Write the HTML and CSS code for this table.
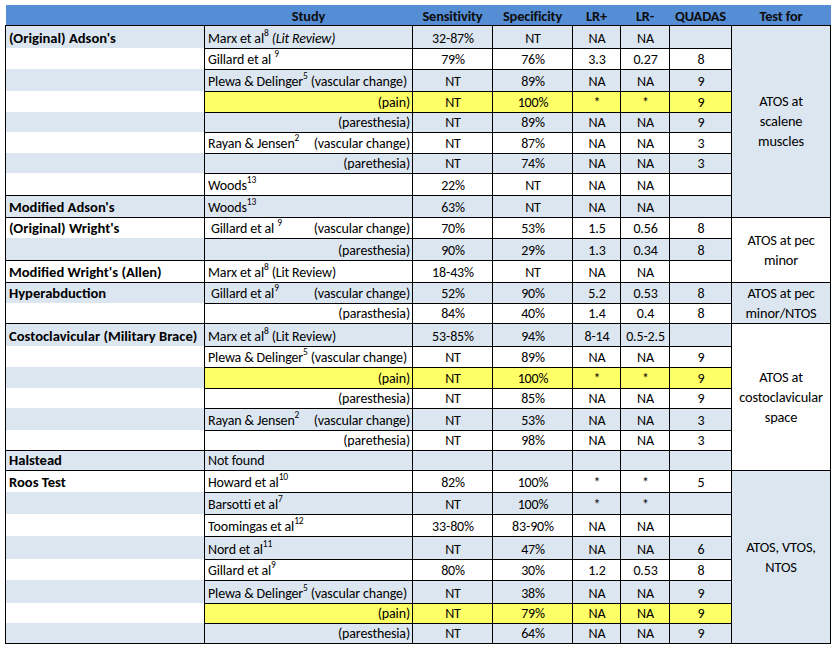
FILE: index.html
```html
<!DOCTYPE html>
<html>
<head>
<meta charset="utf-8">
<link rel="stylesheet" href="styles.css">
</head>
<body>
<table class="tbl">
<colgroup>
<col class="c1"><col class="c2"><col class="c3"><col class="c4"><col class="c5"><col class="c6"><col class="c7"><col class="c8">
</colgroup>
<thead>
<tr class="hd"><th></th><th>Study</th><th>Sensitivity</th><th>Specificity</th><th>LR+</th><th>LR-</th><th>QUADAS</th><th>Test for</th></tr>
</thead>
<tbody>
<tr class="b h23"><td class="t g">(Original) Adson's</td><td class="s">Marx et al<sup>8</sup> <i>(Lit Review)</i></td><td>32-87%</td><td>NT</td><td>NA</td><td>NA</td><td></td><td class="f fb" rowspan="9">ATOS at<br>scalene<br>muscles</td></tr>
<tr class="h21"><td class="t"></td><td class="s">Gillard et al <sup>9</sup></td><td>79%</td><td>76%</td><td>3.3</td><td>0.27</td><td>8</td></tr>
<tr class="b h22"><td class="t"></td><td class="s">Plewa &amp; Delinger<sup>5</sup> (vascular change)</td><td>NT</td><td>89%</td><td>NA</td><td>NA</td><td>9</td></tr>
<tr class="h21 y"><td class="t"></td><td class="s r">(pain)</td><td>NT</td><td>100%</td><td>*</td><td>*</td><td>9</td></tr>
<tr class="b h20"><td class="t"></td><td class="s r">(paresthesia)</td><td>NT</td><td>89%</td><td>NA</td><td>NA</td><td>9</td></tr>
<tr class="h21"><td class="t"></td><td class="s"><div class="sp"><span>Rayan &amp; Jensen<sup>2</sup></span><span>(vascular change)</span></div></td><td>NT</td><td>87%</td><td>NA</td><td>NA</td><td>3</td></tr>
<tr class="b h20"><td class="t"></td><td class="s r">(parethesia)</td><td>NT</td><td>74%</td><td>NA</td><td>NA</td><td>3</td></tr>
<tr class="h22"><td class="t"></td><td class="s">Woods<sup>13</sup></td><td>22%</td><td>NT</td><td>NA</td><td>NA</td><td></td></tr>
<tr class="b h22"><td class="t g">Modified Adson's</td><td class="s">Woods<sup>13</sup></td><td>63%</td><td>NT</td><td>NA</td><td>NA</td><td></td></tr>
<tr class="h21"><td class="t g">(Original) Wright's</td><td class="s"><div class="sp"><span>&nbsp;Gillard et al <sup>9</sup></span><span>(vascular change)</span></div></td><td>70%</td><td>53%</td><td>1.5</td><td>0.56</td><td>8</td><td class="f fw" rowspan="3">ATOS at pec<br>minor</td></tr>
<tr class="b h22"><td class="t"></td><td class="s r">(paresthesia)</td><td>90%</td><td>29%</td><td>1.3</td><td>0.34</td><td>8</td></tr>
<tr class="h22"><td class="t g">Modified Wright's (Allen)</td><td class="s">Marx et al<sup>8</sup> (Lit Review)</td><td>18-43%</td><td>NT</td><td>NA</td><td>NA</td><td></td></tr>
<tr class="b h21"><td class="t g">Hyperabduction</td><td class="s"><div class="sp"><span>&nbsp;Gillard et al<sup>9</sup></span><span>(vascular change)</span></div></td><td>52%</td><td>90%</td><td>5.2</td><td>0.53</td><td>8</td><td class="f fb" rowspan="2">ATOS at pec<br>minor/NTOS</td></tr>
<tr class="h20"><td class="t"></td><td class="s r">(parasthesia)</td><td>84%</td><td>40%</td><td>1.4</td><td>0.4</td><td>8</td></tr>
<tr class="b h23"><td class="t g">Costoclavicular (Military Brace)</td><td class="s">Marx et al<sup>8</sup> (Lit Review)</td><td>53-85%</td><td>94%</td><td>8-14</td><td>0.5-2.5</td><td></td><td class="f fw" rowspan="7">ATOS at<br>costoclavicular<br>space</td></tr>
<tr class="h21"><td class="t"></td><td class="s">Plewa &amp; Delinger<sup>5</sup> (vascular change)</td><td>NT</td><td>89%</td><td>NA</td><td>NA</td><td>9</td></tr>
<tr class="b h21 y"><td class="t"></td><td class="s r">(pain)</td><td>NT</td><td>100%</td><td>*</td><td>*</td><td>9</td></tr>
<tr class="h19"><td class="t"></td><td class="s r">(paresthesia)</td><td>NT</td><td>85%</td><td>NA</td><td>NA</td><td>9</td></tr>
<tr class="b h22"><td class="t"></td><td class="s"><div class="sp"><span>Rayan &amp; Jensen<sup>2</sup></span><span>(vascular change)</span></div></td><td>NT</td><td>53%</td><td>NA</td><td>NA</td><td>3</td></tr>
<tr class="h20"><td class="t"></td><td class="s r">(parethesia)</td><td>NT</td><td>98%</td><td>NA</td><td>NA</td><td>3</td></tr>
<tr class="b h20"><td class="t g">Halstead</td><td class="s">Not found</td><td></td><td></td><td></td><td></td><td></td></tr>
<tr class="h22"><td class="t g">Roos Test</td><td class="s">Howard et al<sup>10</sup></td><td>82%</td><td>100%</td><td>*</td><td>*</td><td>5</td><td class="f fb" rowspan="8">ATOS, VTOS,<br>NTOS</td></tr>
<tr class="b h22"><td class="t"></td><td class="s">Barsotti et al<sup>7</sup></td><td>NT</td><td>100%</td><td>*</td><td>*</td><td></td></tr>
<tr class="h22"><td class="t"></td><td class="s">Toomingas et al<sup>12</sup></td><td>33-80%</td><td>83-90%</td><td>NA</td><td>NA</td><td></td></tr>
<tr class="b h23"><td class="t"></td><td class="s">Nord et al<sup>11</sup></td><td>NT</td><td>47%</td><td>NA</td><td>NA</td><td>6</td></tr>
<tr class="h21"><td class="t"></td><td class="s">Gillard et al<sup>9</sup></td><td>80%</td><td>30%</td><td>1.2</td><td>0.53</td><td>8</td></tr>
<tr class="b h23"><td class="t"></td><td class="s">Plewa &amp; Delinger<sup>5</sup> (vascular change)</td><td>NT</td><td>38%</td><td>NA</td><td>NA</td><td>9</td></tr>
<tr class="h19 y"><td class="t"></td><td class="s r">(pain)</td><td>NT</td><td>79%</td><td>NA</td><td>NA</td><td>9</td></tr>
<tr class="b h20"><td class="t last"></td><td class="s r">(paresthesia)</td><td>NT</td><td>64%</td><td>NA</td><td>NA</td><td>9</td></tr>
</tbody>
</table>
</body>
</html>
```
FILE: styles.css
```css
html, body {
  margin: 0;
  padding: 0;
  background: #ffffff;
}
body {
  font-family: Carlito, Calibri, Lato, "Open Sans", sans-serif;
  font-size: 14px;
  letter-spacing: -0.15px;
  color: #000;
}
.tbl {
  margin: 5px 0 0 5px;
  border-collapse: collapse;
  table-layout: fixed;
  width: 825px;
}
.c1 { width: 199px; }
.c2 { width: 208px; }
.c3 { width: 80px; }
.c4 { width: 80px; }
.c5 { width: 48px; }
.c6 { width: 49px; }
.c7 { width: 62px; }
.c8 { width: 99px; }

.hd {
  background: #558ed5;
  height: 20px;
}
.hd th {
  padding: 0;
  font-weight: bold;
  font-size: 14.4px;
  text-align: center;
  line-height: 18px;
  color: #0d0d0d;
  vertical-align: bottom;
  border: none;
}
tbody td {
  padding: 0 2px 0 3px;
  border: 1px solid #000;
  text-align: center;
  vertical-align: bottom;
  line-height: 19px;
  white-space: nowrap;
  overflow: hidden;
}
tbody tr { background: #ffffff; }
tbody tr.b { background: #dce6f1; }
tr.y td { background: #ffff66; }
tr.y td.t { background: transparent; }

.h19 { height: 19px; }
.h20 { height: 20px; }
.h21 { height: 21px; }
.h22 { height: 22px; }
.h23 { height: 23px; }

td.t {
  text-align: left;
  font-weight: bold;
  font-size: 14.6px;
  letter-spacing: 0;
  border-top: none;
  border-bottom: none;
}
td.t.g { border-top: 1px solid #000; }
td.t.last { border-bottom: 1px solid #000; }

td.s { text-align: left; }
td.s.r { text-align: right; }
.sp {
  display: flex;
  justify-content: space-between;
}
sup {
  font-size: 9.5px;
  line-height: 0;
  vertical-align: 7px;
}
td.f {
  vertical-align: middle;
  white-space: normal;
  line-height: 20px;
  padding: 0 2px;
  font-size: 14.4px;
}
td.fb { background: #dce6f1; }
td.fw { background: #ffffff; }
```
